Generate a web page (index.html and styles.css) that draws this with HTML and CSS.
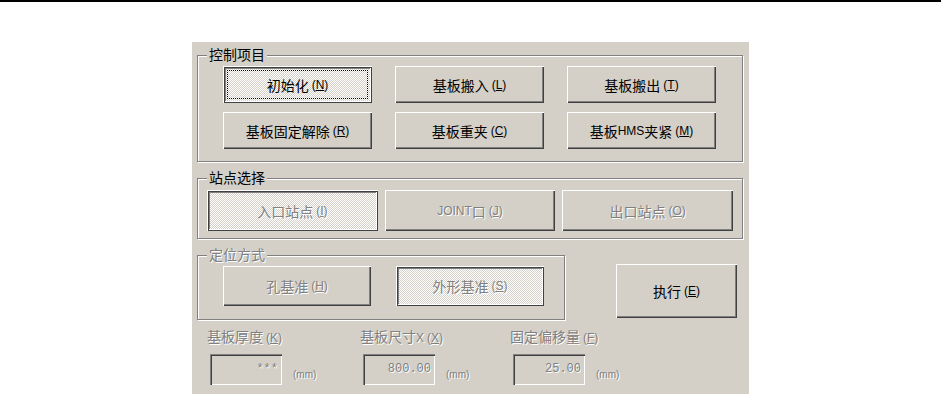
FILE: index.html
```html
<!DOCTYPE html>
<html lang="zh-CN">
<head>
  <meta charset="UTF-8" />
  <title>基板控制</title>
  <link rel="stylesheet" href="styles.css">
</head>
<body>
  <div class="panel">
    <div class="group group-ctrl">
      <div class="group-title">控制项目</div>
      <div class="ctrl-grid">
        <button class="btn btn-checked btn-focus">初始化<span class="key">(<u>N</u>)</span></button>
        <button class="btn">基板搬入<span class="key">(<u>L</u>)</span></button>
        <button class="btn">基板搬出<span class="key">(<u>T</u>)</span></button>
        <button class="btn">基板固定解除<span class="key">(<u>R</u>)</span></button>
        <button class="btn">基板重夹<span class="key">(<u>C</u>)</span></button>
        <button class="btn">基板<span class="latin">HMS</span>夹紧<span class="key">(<u>M</u>)</span></button>
      </div>
    </div>

    <div class="group group-station">
      <div class="group-title">站点选择</div>
      <div class="station-row">
        <button class="btn btn-checked" disabled>入口站点<span class="key">(<u>I</u>)</span></button>
        <button class="btn" disabled><span class="latin">JOINT</span>口<span class="key">(<u>J</u>)</span></button>
        <button class="btn" disabled>出口站点<span class="key">(<u>O</u>)</span></button>
      </div>
    </div>

    <div class="mode-row">
      <div class="group group-mode is-disabled">
        <div class="group-title">定位方式</div>
        <div class="mode-btns">
          <button class="btn" disabled>孔基准<span class="key">(<u>H</u>)</span></button>
          <button class="btn btn-checked" disabled>外形基准<span class="key">(<u>S</u>)</span></button>
        </div>
      </div>
      <button class="btn btn-run">执行<span class="key">(<u>E</u>)</span></button>
    </div>

    <div class="fields">
      <div class="field">
        <div class="field-label">基板厚度<span class="key">(<u>K</u>)</span></div>
        <div class="field-row">
          <input type="text" value="***" disabled />
          <span class="unit">(mm)</span>
        </div>
      </div>
      <div class="field">
        <div class="field-label">基板尺寸<span class="latin">X</span><span class="key">(<u>X</u>)</span></div>
        <div class="field-row">
          <input type="text" value="800.00" disabled />
          <span class="unit">(mm)</span>
        </div>
      </div>
      <div class="field">
        <div class="field-label">固定偏移量<span class="key">(<u>F</u>)</span></div>
        <div class="field-row">
          <input type="text" value="25.00" disabled />
          <span class="unit">(mm)</span>
        </div>
      </div>
    </div>
  </div>
</body>
</html>
```

FILE: styles.css
```css
body {
  margin: 0;
  background: #fff;
  border-top: 2px solid #000;
  font-family: "Liberation Sans", "Noto Sans CJK SC", sans-serif;
  font-size: 14px;
  color: #000;
  overflow: hidden;
}

.panel {
  width: 557px;
  height: 352px;
  box-sizing: border-box;
  margin: 40px auto 0;
  padding: 13px 6px 0 5px;
  background: #d4d0c8;
}

/* etched group box */
.group {
  border: 1px solid #808080;
  box-shadow: 1px 1px 0 #fff, inset 1px 1px 0 #fff;
}

.group-title {
  width: fit-content;
  height: 14px;
  line-height: 14px;
  margin: -8px 0 0 9px;
  padding: 0 2px;
  background: #d4d0c8;
}

.is-disabled .group-title,
.field-label,
.unit,
.btn:disabled {
  color: #808080;
  text-shadow: 1px 1px 0 #fff;
}

.ctrl-grid {
  display: grid;
  grid-template-columns: repeat(3, 1fr);
  grid-auto-rows: 37px;
  column-gap: 23px;
  row-gap: 9px;
  padding: 4px 26px 12px 25px;
}

.group-station {
  margin-top: 16px;
}

.station-row {
  display: grid;
  grid-template-columns: repeat(3, 1fr);
  grid-auto-rows: 41px;
  column-gap: 7px;
  padding: 5px 9px 7px;
}

.mode-row {
  display: flex;
  align-items: flex-start;
  margin-top: 16px;
}

.group-mode {
  width: 368px;
  box-sizing: border-box;
}

.mode-btns {
  display: grid;
  grid-template-columns: 148px 148px;
  grid-auto-rows: 40px;
  column-gap: 25px;
  padding: 4px 0 13px 25px;
}

/* classic 3d buttons */
.btn {
  display: flex;
  align-items: center;
  justify-content: center;
  padding: 0;
  border: 0;
  font: inherit;
  color: #000;
  background: #d4d0c8;
  box-shadow: inset 1px 1px 0 #fff, inset -1px -1px 0 #404040, inset -2px -2px 0 #808080;
  cursor: default;
}

.btn-checked {
  background: repeating-conic-gradient(#fff 0 25%, #d4d0c8 0 50%) 0 0 / 2px 2px;
  box-shadow: inset 1px 1px 0 #fff, inset -1px -1px 0 #404040,
    inset 2px 2px 0 #404040, inset -2px -2px 0 #fff, inset 3px 3px 0 #808080;
}

.btn-focus {
  outline: 1px dotted #000;
  outline-offset: -5px;
}

.btn-run {
  width: 121px;
  height: 54px;
  margin: 9px 6px 0 auto;
}

.key {
  font-size: 12px;
  margin-left: 3px;
}

.latin {
  font-size: 12px;
}

.fields {
  display: grid;
  grid-template-columns: 153px 150px 1fr;
  margin-top: 10px;
  padding-left: 10px;
}

.field-label {
  height: 14px;
  line-height: 14px;
  margin-bottom: 10px;
}

.field-row {
  display: flex;
  align-items: flex-end;
  padding-left: 3px;
}

.field-row input {
  width: 72px;
  height: 31px;
  box-sizing: border-box;
  padding: 0 4px 2px;
  border: 0;
  background: #d4d0c8;
  box-shadow: inset 1px 1px 0 #808080, inset 2px 2px 0 #404040, inset -1px -1px 0 #fff;
  font-family: "Liberation Mono", monospace;
  font-size: 12px;
  text-align: right;
  color: #808080;
  text-shadow: 1px 1px 0 #fff;
}

.unit {
  font-size: 10px;
  margin: 0 0 5px 11px;
}
```
